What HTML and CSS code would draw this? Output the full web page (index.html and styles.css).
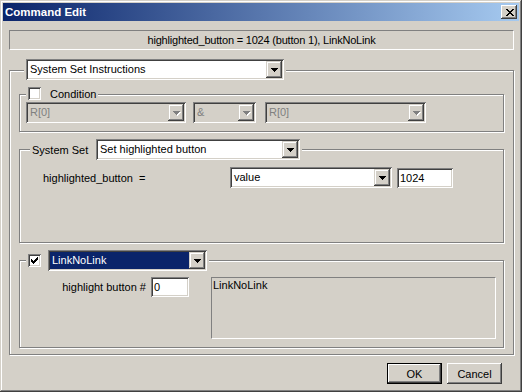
FILE: index.html
```html
<!DOCTYPE html>
<html lang="en">
<head>
  <meta charset="UTF-8">
  <title>Command Edit</title>
  <link rel="stylesheet" href="styles.css">
</head>
<body>
  <div class="window">
    <div class="titlebar">
      <span class="title">Command Edit</span>
      <span class="close">
        <svg width="8" height="7" viewBox="0 0 8 7" shape-rendering="crispEdges">
          <path d="M0 0h2v1H0z M6 0h2v1H6z M1 1h2v1H1z M5 1h2v1H5z M2 2h4v1H2z M3 3h2v1H3z M2 4h4v1H2z M1 5h2v1H1z M5 5h2v1H5z M0 6h2v1H0z M6 6h2v1H6z" fill="#000"/>
        </svg>
      </span>
    </div>

    <div class="content">
      <div class="status">highlighted_button = 1024 (button 1), LinkNoLink</div>

      <div class="group outer">
        <div class="group-head head-big head-outer">
          <div class="head-item">
            <div class="combo w-instr">
              <span class="combo-text">System Set Instructions</span>
              <span class="drop"></span>
            </div>
          </div>
        </div>

        <!-- condition -->
        <div class="group cond">
          <div class="group-head head-check">
            <div class="head-item">
              <span class="check"></span>
              <span class="check-label">Condition</span>
            </div>
          </div>
          <div class="row cond-row">
            <div class="combo disabled w-reg">
              <span class="combo-text">R[0]</span>
              <span class="drop"></span>
            </div>
            <div class="combo disabled w-op">
              <span class="combo-text">&amp;</span>
              <span class="drop"></span>
            </div>
            <div class="combo disabled w-reg2">
              <span class="combo-text">R[0]</span>
              <span class="drop"></span>
            </div>
          </div>
        </div>

        <!-- system set -->
        <div class="group sys">
          <div class="group-head head-big head-sys">
            <div class="head-item">
              <span class="head-label">System Set</span>
              <div class="combo w-set">
                <span class="combo-text">Set highlighted button</span>
                <span class="drop"></span>
              </div>
            </div>
          </div>
          <div class="row sys-row">
            <span class="field-label">highlighted_button&nbsp; =</span>
            <div class="combo w-value">
              <span class="combo-text">value</span>
              <span class="drop"></span>
            </div>
            <div class="edit w-num">1024</div>
          </div>
        </div>

        <!-- link -->
        <div class="group link">
          <div class="group-head head-big head-link">
            <div class="head-item">
              <span class="check checked">
                <svg width="7" height="7" viewBox="0 0 7 7" shape-rendering="crispEdges">
                  <path d="M6 0h1v1H6z M5 1h2v1H5z M0 2h1v1H0z M4 2h3v1H4z M0 3h2v1H0z M3 3h3v1H3z M0 4h5v1H0z M1 5h3v1H1z M2 6h1v1H2z" fill="#000"/>
                </svg>
              </span>
              <div class="combo w-link">
                <span class="combo-text selected">LinkNoLink</span>
                <span class="drop"></span>
              </div>
            </div>
          </div>
          <div class="row link-row">
            <span class="field-label right">highlight button #</span>
            <div class="edit w-small">0</div>
            <div class="static-box">LinkNoLink</div>
          </div>
        </div>
      </div>

      <div class="buttons">
        <button class="btn default">OK</button>
        <button class="btn">Cancel</button>
      </div>
    </div>
  </div>
</body>
</html>
```

FILE: styles.css
```css
body {
  margin: 0;
  padding: 0;
  font-family: "Liberation Sans", Arial, sans-serif;
  font-size: 11px;
  color: #000;
}

.window {
  width: 522px;
  height: 392px;
  box-sizing: border-box;
  padding: 3px;
  background-color: #d4d0c8;
  box-shadow: inset -1px -1px #404040, inset 1px 1px #d4d0c8,
              inset -2px -2px #808080, inset 2px 2px #fff;
}

/* title bar */
.titlebar {
  height: 18px;
  display: flex;
  align-items: center;
  justify-content: space-between;
  padding: 0 2px;
  background: linear-gradient(to right, #0a246a, #a6caf0);
}

.title {
  color: #fff;
  font-weight: bold;
  font-size: 11.5px;
}

.close {
  width: 16px;
  height: 14px;
  box-sizing: border-box;
  display: flex;
  align-items: center;
  justify-content: center;
  padding-left: 1px;
  background-color: #d4d0c8;
  box-shadow: inset -1px -1px #404040, inset 1px 1px #fff,
              inset -2px -2px #808080;
}

.content {
  padding: 9px 5px 0 6px;
}

.status {
  height: 20px;
  line-height: 18px;
  box-sizing: border-box;
  border: 1px solid;
  border-color: #808080 #fff #fff #808080;
  text-align: center;
  letter-spacing: -0.2px;
}

/* etched group boxes */
.group {
  border: 1px solid #808080;
  box-shadow: 1px 1px 0 #fff, inset 1px 1px 0 #fff;
}

.outer {
  margin-top: 20px;
  padding: 0 9px 6px 9px;
}

.group-head {
  display: flex;
}

.head-item {
  display: flex;
  align-items: center;
  background-color: #d4d0c8;
  padding: 0 2px;
}

.head-big {
  height: 21px;
  margin-top: -11px;
}

.head-outer {
  margin-top: -12px;
  margin-left: 5px;
}

.head-check {
  height: 13px;
  margin-top: -8px;
  margin-left: 6px;
}

.head-sys {
  margin-left: 10px;
}

.head-link {
  margin-left: 6px;
}

.head-label {
  width: 64px;
}

.check-label {
  margin-left: 9px;
}

.cond {
  margin-top: 14px;
  padding-bottom: 8px;
}

.sys {
  margin-top: 17px;
  padding-bottom: 54px;
}

.link {
  margin-top: 17px;
  padding-bottom: 8px;
}

.row {
  display: flex;
  align-items: center;
}

.cond-row {
  margin-top: 2px;
  padding-left: 6px;
  gap: 7px;
}

.cond-row .w-reg2 {
  margin-left: 2px;
}

.sys-row {
  margin-top: 7px;
  padding-left: 23px;
}

.sys-row .field-label {
  width: 187px;
}

.sys-row .edit {
  margin-left: 5px;
}

.link-row {
  margin-top: 6px;
  padding-left: 23px;
  align-items: flex-start;
}

.link-row .field-label {
  width: 103px;
  height: 20px;
  line-height: 20px;
  margin-right: 5px;
}

.right {
  text-align: right;
}

/* combo boxes */
.combo {
  display: flex;
  height: 21px;
  box-sizing: border-box;
  padding: 2px;
  background-color: #fff;
  box-shadow: inset 1px 1px #808080, inset -1px -1px #fff,
              inset 2px 2px #404040, inset -2px -2px #d4d0c8;
}

.combo-text {
  flex: 1;
  padding-left: 2px;
  line-height: 17px;
  white-space: nowrap;
  overflow: hidden;
}

.combo-text.selected {
  background-color: #0a246a;
  color: #fff;
}

.drop {
  width: 16px;
  height: 17px;
  display: flex;
  align-items: center;
  justify-content: center;
  background-color: #d4d0c8;
  box-shadow: inset -1px -1px #404040, inset 1px 1px #d4d0c8,
              inset -2px -2px #808080, inset 2px 2px #fff;
}

.drop::after {
  content: "";
  width: 7px;
  height: 4px;
  background:
    linear-gradient(#000, #000) 0 0 / 7px 1px no-repeat,
    linear-gradient(#000, #000) 1px 1px / 5px 1px no-repeat,
    linear-gradient(#000, #000) 2px 2px / 3px 1px no-repeat,
    linear-gradient(#000, #000) 3px 3px / 1px 1px no-repeat;
}

.combo.disabled {
  background-color: #d4d0c8;
  color: #808080;
}

.combo.disabled .drop::after {
  background:
    linear-gradient(#808080, #808080) 0 0 / 7px 1px no-repeat,
    linear-gradient(#808080, #808080) 1px 1px / 5px 1px no-repeat,
    linear-gradient(#808080, #808080) 2px 2px / 3px 1px no-repeat,
    linear-gradient(#808080, #808080) 3px 3px / 1px 1px no-repeat;
  filter: drop-shadow(1px 1px 0 #fff);
}

.w-instr { width: 258px; }
.w-reg { width: 160px; }
.w-op { width: 63px; }
.w-reg2 { width: 161px; }
.w-set { width: 204px; }
.w-value { width: 162px; }
.w-link { width: 159px; margin-left: 7px; }

/* edits */
.edit {
  height: 20px;
  box-sizing: border-box;
  padding: 2px 3px;
  line-height: 16px;
  background-color: #fff;
  box-shadow: inset 1px 1px #808080, inset -1px -1px #fff,
              inset 2px 2px #404040, inset -2px -2px #d4d0c8;
}

.w-num { width: 56px; }
.w-small { width: 38px; }

.static-box {
  width: 285px;
  height: 62px;
  box-sizing: border-box;
  margin-left: 22px;
  padding: 1px 1px;
  line-height: 13px;
  border: 1px solid;
  border-color: #808080 #fff #fff #808080;
}

/* check boxes */
.check {
  width: 13px;
  height: 13px;
  box-sizing: border-box;
  display: flex;
  align-items: center;
  justify-content: center;
  background-color: #fff;
  box-shadow: inset 1px 1px #808080, inset -1px -1px #fff,
              inset 2px 2px #404040, inset -2px -2px #d4d0c8;
}

/* buttons */
.buttons {
  display: flex;
  justify-content: flex-end;
  gap: 5px;
  margin-top: 8px;
  padding-right: 12px;
}

.btn {
  width: 55px;
  height: 21px;
  padding: 0;
  border: none;
  font-family: "Liberation Sans", Arial, sans-serif;
  font-size: 11px;
  color: #000;
  background-color: #d4d0c8;
  box-shadow: inset -1px -1px #404040, inset 1px 1px #fff,
              inset -2px -2px #808080;
}

.btn.default {
  box-shadow: inset 0 0 0 1px #000, inset -2px -2px #404040, inset 2px 2px #fff,
              inset -3px -3px #808080;
}
```
